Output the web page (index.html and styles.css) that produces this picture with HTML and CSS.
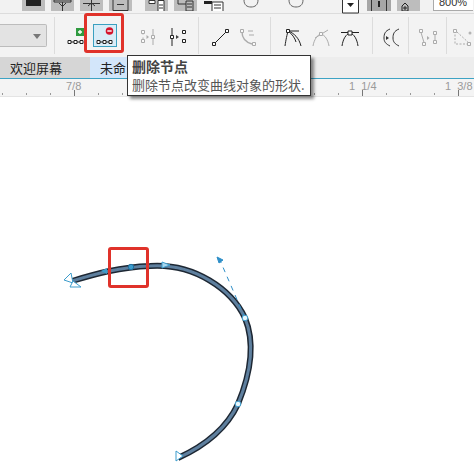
FILE: index.html
```html
<!DOCTYPE html>
<html lang="en">
<head>
  <meta charset="UTF-8" />
  <title>删除节点</title>
  <link rel="stylesheet" href="styles.css">
</head>
<body>
  <div class="app">
    <!-- Standard toolbar, cut off at the top -->
    <div class="topbar">
      <span class="top-btn first"><svg width="23" height="14"><rect x="4" y="0" width="15" height="6" fill="#222"/></svg></span>
      <span class="top-btn"><svg width="23" height="14"><path d="M3 0h17v2H3zM11.500 2v9M8 3l3.500 3.500L15 3" fill="none" stroke="#333"/></svg></span>
      <span class="top-btn"><svg width="23" height="14"><path d="M3 3.500h17M11.500 0v11M8 6l3.500-3L15 6" fill="none" stroke="#333"/></svg></span>
      <span class="top-btn"><svg width="23" height="14"><path d="M4 0v10.500h15V0M8 4.500h7" fill="none" stroke="#333"/></svg></span>
      <span class="top-btn group-start"><svg width="24" height="14"><path d="M4 .5h6v3H4zM13 .5h6v11h-6zM14 5h4M14 8h4" fill="#fff" stroke="#333"/></svg></span>
      <span class="top-btn"><svg width="23" height="14"><path d="M4 0v4h8M12 1h7v10h-7zM13 4h5M13 7h5" fill="none" stroke="#333"/></svg></span>
      <span class="top-btn plain"><svg width="23" height="14"><path d="M1 1h8v3H1z" fill="#222"/><path d="M9 2h11v10H9zM11 5h7M11 8h7" fill="#fff" stroke="#333"/></svg></span>
      <span class="top-arc"><svg width="16" height="14"><path d="M1 0c0 5 3 7 7 7s7-2 7-7" fill="none" stroke="#666"/></svg></span>
      <span class="top-arc second"><svg width="16" height="14"><path d="M1 0c0 5 3 7 7 7s7-2 7-7" fill="none" stroke="#666"/></svg></span>
      <span class="top-sq"><svg width="17" height="14"><path d="M.5 0v13h16V0" fill="#fff" stroke="#333"/><path d="M5 3h7l-3.500 4z" fill="#222"/></svg></span>
      <span class="top-btn dark"><svg width="24" height="14"><path d="M4.500 0v12h15V0" fill="none" stroke="#333"/><path d="M12 1v6" stroke="#222" stroke-width="2"/></svg></span>
      <span class="top-btn"><svg width="23" height="14"><path d="M5 6l3-3 3 3v5H5zM7 7h2v2H7z" fill="none" stroke="#222"/></svg></span>
      <span class="zoom-box">800%</span>
    </div>

    <!-- Node edit property bar -->
    <div class="propbar">
      <div class="select"><span class="caret"></span></div>
      <div class="group g1">
        <span class="tool"><svg width="20" height="20" viewBox="0 0 20 20"><rect x="9" y="0" width="8" height="8" fill="#2f9a3f"/><path d="M11 4h4M13 2v4" stroke="#fff" stroke-width="1.300"/><path d="M1 12.500h3v3H1zM7 12.500h3v3H7zM13 12.500h3v3h-3zM4 14h3M10 14h3" fill="#fff" stroke="#222"/></svg></span>
        <span class="tool sel"><span class="active"><svg width="20" height="20" viewBox="0 0 20 20"><circle cx="14.500" cy="5" r="3.800" fill="#d5142c"/><path d="M12.300 5h4.400" stroke="#fff" stroke-width="1.400"/><path d="M2 14.500h3v3H2zM8 14.500h3v3H8zM14 14.500h3v3h-3zM5 16h3M11 16h3" fill="#fff" stroke="#222"/></svg></span></span>
        <span class="tool gap faded"><svg width="20" height="20" viewBox="0 0 20 20"><path d="M3.500 2.500h3v3h-3zM3.500 11.500h3v3h-3zM5 5.500v1M5 9.500v2M15 1v16" fill="#fff" stroke="#666"/><path d="M13.500 7.500h3v3h-3z" fill="#fff" stroke="#666"/><path d="M8.500 7l2.500 2-2.500 2z" fill="#666"/></svg></span>
        <span class="tool"><svg width="20" height="20" viewBox="0 0 20 20"><path d="M4 0v18" stroke="#222" fill="none"/><path d="M2.500 7.500h3v3h-3zM14.500 2.500h3v3h-3zM14.500 11.500h3v3h-3z" fill="#fff" stroke="#222"/><path d="M8 7l3 2-3 2z" fill="#444"/></svg></span>
      </div>
      <div class="group g2">
        <span class="tool"><svg width="20" height="20" viewBox="0 0 20 20"><path d="M3 16L16 3" stroke="#222"/><path d="M1.500 14.500h3v3h-3zM14.500 1.500h3v3h-3z" fill="#fff" stroke="#222"/></svg></span>
        <span class="tool faded"><svg width="20" height="20" viewBox="0 0 20 20"><path d="M3 4c0 6 3 10 10 12" fill="none" stroke="#666" stroke-width="1.400"/><path d="M1.500 1.500h3v3h-3zM13.500 14.500h3v3h-3z" fill="#fff" stroke="#666"/><path d="M9 3h5M10 7h5" stroke="#666"/></svg></span>
      </div>
      <div class="group g3">
        <span class="tool"><svg width="20" height="20" viewBox="0 0 20 20"><path d="M2 18C3 11 4 7 5 3c6 2 11 7 13 15M5 3c4 3 7 7 8 11M5 3l11 0" fill="none" stroke="#222"/><path d="M3.500 1.500h3v3h-3z" fill="#fff" stroke="#222"/></svg></span>
        <span class="tool faded"><svg width="20" height="20" viewBox="0 0 20 20"><path d="M2 18C3 12 6 7 10 6c4 1 7 6 8 12M4 10L17 2" fill="none" stroke="#666"/><path d="M8.500 4.500h3v3h-3z" fill="#fff" stroke="#666"/></svg></span>
        <span class="tool nudge"><svg width="20" height="20" viewBox="0 0 20 20"><path d="M2 18C3 11 6 6 10 5c4 1 7 6 8 13M1 4.500h18" fill="none" stroke="#222"/><path d="M8 3h4v4H8z" fill="#fff" stroke="#222"/></svg></span>
      </div>
      <div class="group g4">
        <span class="tool"><svg width="20" height="20" viewBox="0 0 20 20"><path d="M8 1C3 3 2 6 2 10s2 6 6 8M17 1c-5 2-6 5-6 9s2 6 6 8" fill="none" stroke="#333"/><path d="M4 8l3 2-3 2z" fill="#333"/></svg></span>
      </div>
      <div class="group g5">
        <span class="tool faded"><svg width="20" height="20" viewBox="0 0 20 20"><path d="M1.500 1.500h3v3h-3zM4.500 14.500h3v3h-3zM15.500 3.500h3v3h-3zM15.500 12.500h3v3h-3zM3 4.500l3 10M17 6.500v6" fill="#fff" stroke="#666"/><path d="M9 8l2.500 2L9 12z" fill="#666"/></svg></span>
      </div>
      <div class="group g6">
        <span class="tool faded"><svg width="20" height="20" viewBox="0 0 20 20"><path d="M2 3v13h14M4 4l12 11" fill="none" stroke="#666" stroke-dasharray="2 1.500"/><path d="M.5 1.500h3v3h-3zM14.500 14.500h3v3h-3z" fill="#fff" stroke="#666"/><circle cx="17" cy="5" r="1.500" fill="#777"/></svg></span>
      </div>
    </div>

    <!-- Document tabs -->
    <div class="tabs">
      <span class="tab">欢迎屏幕</span>
      <span class="tab current">未命</span>
    </div>

    <!-- Ruler -->
    <div class="ruler">
      <span class="ruler-label l1">7/8</span>
      <span class="ruler-label l2">1&nbsp; 1/4</span>
      <span class="ruler-label l3">1&nbsp; 3/8</span>
      <span class="ruler-tick t1"></span>
      <span class="ruler-tick t2"></span>
      <span class="ruler-tick t3"></span>
    </div>

    <!-- Drawing page -->
    <div class="canvas">
      <svg class="drawing" width="474" height="372" viewBox="0 97 474 372">
        <path d="M72 281C95 274 120 267 150 266C195 263 232 290 245 318C256 345 250 375 238 404C225 432 200 448 178 458" fill="none" stroke="#1d2733" stroke-width="6"/>
        <path d="M72 281C95 274 120 267 150 266C195 263 232 290 245 318C256 345 250 375 238 404C225 432 200 448 178 458" fill="none" stroke="#5e7f9e" stroke-width="3"/>
        <path d="M245 318L219 258" fill="none" stroke="#2f8fc8" stroke-dasharray="5 5"/>
        <path d="M217 257l6 3-4 3z" fill="#2f8fc8" stroke="#2f8fc8"/>
        <path d="M71 273l-7 7 9 3z" fill="#fff" stroke="#3c9ccc"/>
        <path d="M73 281l8 6-11 0z" fill="#fff" stroke="#3c9ccc"/>
        <path d="M107 268l-6 3 6 3z" fill="#3c9ccc"/>
        <path d="M162 262l8 3-8 3z" fill="#a9d8f0" stroke="#3c9ccc"/>
        <circle cx="131" cy="267" r="2.700" fill="#3c9ccc" stroke="#1f6f9f"/>
        <circle cx="245" cy="318" r="2.800" fill="#e8f6fc" stroke="#3c9ccc"/>
        <circle cx="238" cy="404" r="2.800" fill="#e8f6fc" stroke="#3c9ccc"/>
        <path d="M176 451l0 10 7-5z" fill="#fff" stroke="#3c9ccc"/>
      </svg>
    </div>
  </div>

  <!-- Screenshot annotations and tooltip lie over the UI -->
  <div class="mark mark-btn"></div>
  <div class="mark mark-node"></div>
  <div class="tooltip">
    <div class="tip-title">删除节点</div>
    <div class="tip-text">删除节点改变曲线对象的形状.</div>
  </div>
</body>
</html>
```

FILE: styles.css
```css
* {
  margin: 0;
  padding: 0;
  box-sizing: border-box;
}

body {
  width: 474px;
  height: 469px;
  overflow: hidden;
  position: relative;
  background: #fff;
  font-family: "Noto Sans CJK SC", "Liberation Sans", sans-serif;
}

.app {
  display: flex;
  flex-direction: column;
  height: 469px;
}

/* top toolbar */
.topbar {
  height: 14px;
  display: flex;
  background: #f2f2f2;
  border-bottom: 1px solid #dcdcdc;
  flex-shrink: 0;
  padding-left: 22px;
}
.top-btn {
  width: 23px;
  height: 11px;
  background: #bdbdbd;
  margin-right: 6px;
  overflow: hidden;
}
.top-btn svg, .top-arc svg, .top-sq svg {
  display: block;
}
.top-btn.group-start {
  margin-left: 7px;
}
.top-btn.plain {
  background: transparent;
  margin-right: 17px;
}
.top-btn.dark {
  width: 24px;
  background: #a6a6a6;
}
.top-arc {
  width: 16px;
  margin-right: 29px;
}
.top-arc.second {
  margin-right: 38px;
}
.top-sq {
  width: 17px;
  margin-right: 8px;
}
.zoom-box {
  width: 40px;
  height: 11px;
  margin-left: 7px;
  background: #fff;
  border: 1px solid #aaa;
  border-top: none;
  border-right: none;
  font-size: 11px;
  line-height: 5px;
  padding-left: 5px;
  color: #333;
  overflow: hidden;
  font-family: "Liberation Sans", sans-serif;
}

/* property bar */
.propbar {
  height: 43px;
  display: flex;
  background: #f3f3f3;
  flex-shrink: 0;
}
.select {
  width: 47px;
  height: 23px;
  margin-top: 10px;
  background: #e3e3e3;
  border: 1px solid #bcbcbc;
  border-left: none;
  border-radius: 0 2px 2px 0;
  position: relative;
  flex-shrink: 0;
}
.caret {
  position: absolute;
  right: 5px;
  top: 9px;
  border: 4px solid transparent;
  border-top: 5px solid #777;
  border-bottom: none;
}
.group {
  display: flex;
  height: 37px;
  margin-top: 3px;
  border-left: 1px solid #dcdcdc;
  flex-shrink: 0;
}
.g1 { margin-left: 7px; width: 144px; padding-left: 8px; }
.g2 { width: 72px; padding-left: 8px; }
.g3 { width: 102px; padding-left: 8px; }
.g4 { width: 36px; padding-left: 5px; }
.g5 { width: 38px; padding-left: 5px; }
.g6 { width: 28px; padding-left: 5px; }

.tool {
  width: 28px;
  height: 37px;
  padding-top: 4px;
  display: flex;
  align-items: center;
  justify-content: center;
}
.tool.sel {
  padding-top: 0;
}
.tool.gap {
  margin-left: 15px;
  margin-right: 2px;
}
.tool.nudge {
  margin-left: 1px;
}
.tool.faded svg {
  opacity: 0.5;
}
.active {
  width: 24px;
  height: 23px;
  background: #d9ecf7;
  border: 1px solid #3aa0c0;
  display: flex;
  align-items: center;
  justify-content: center;
}

/* tabs */
.tabs {
  height: 22px;
  display: flex;
  background: #ededed;
  border-bottom: 1px solid #3da3c4;
  flex-shrink: 0;
}
.tab {
  width: 90px;
  background: #d6d6d6;
  font-size: 13px;
  line-height: 21px;
  padding-left: 10px;
  color: #222;
}
.tab.current {
  width: 60px;
  background: #d3e6fa;
}

/* ruler */
.ruler {
  height: 18px;
  flex-shrink: 0;
  position: relative;
  background-color: #f4f4f4;
  background-image: repeating-linear-gradient(to right, #999 0 1px, transparent 1px 24px);
  background-size: 100% 2px;
  background-position: 2px 14px;
  background-repeat: no-repeat;
  border-bottom: 1px solid #e4e4e4;
}
.ruler-label {
  position: absolute;
  top: 1px;
  font-size: 11px;
  line-height: 13px;
  color: #9a9a9a;
  font-family: "Liberation Sans", sans-serif;
}
.l1 { left: 66px; }
.l2 { left: 349px; }
.l3 { left: 445px; }
.ruler-tick {
  position: absolute;
  top: 11px;
  width: 1px;
  height: 6px;
  background: #777;
}
.t1 { left: 74px; }
.t2 { left: 362px; }
.t3 { left: 458px; }

/* canvas */
.canvas {
  flex: 1;
  position: relative;
  background: #fff;
}
.drawing {
  position: absolute;
  left: 0;
  top: 0;
}

/* overlays */
.mark {
  position: absolute;
  border: 3px solid #e0322a;
  border-radius: 3px;
}
.mark-btn {
  left: 84px;
  top: 13px;
  width: 40px;
  height: 40px;
}
.mark-node {
  left: 108px;
  top: 247px;
  width: 41px;
  height: 41px;
}
.tooltip {
  position: absolute;
  left: 127px;
  top: 55px;
  width: 184px;
  height: 41px;
  background: #fff;
  border: 1px solid #333;
  box-shadow: 3px 3px 3px rgba(0, 0, 0, 0.45);
  padding: 1px 4px;
  font-size: 13px;
  line-height: 17px;
  color: #555;
  white-space: nowrap;
}
.tip-title {
  font-size: 14px;
  line-height: 19px;
  font-weight: bold;
  color: #444;
}
```
